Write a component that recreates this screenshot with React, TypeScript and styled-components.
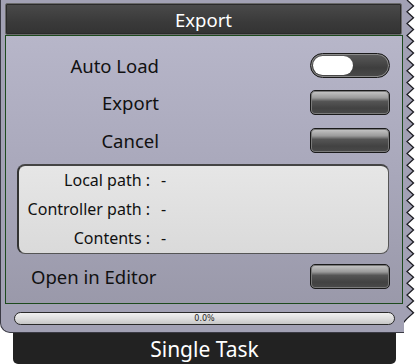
import React from "react";
import styled, { createGlobalStyle } from "styled-components";

const Global = createGlobalStyle`
  html, body { margin: 0; padding: 0; background: #ffffff; }
  body { font-family: "Noto Sans", "Open Sans", sans-serif; }
`;

const Root = styled.div`
  width: 415px;
  height: 364px;
  display: flex;
  flex-direction: column;
`;

const Top = styled.div`
  display: flex;
  height: 333px;
`;

const Panel = styled.div`
  width: 404px;
  height: 333px;
  box-sizing: border-box;
  background: #a2a1b4;
  border-left: 1px solid #3a3a44;
  border-bottom: 1px solid #3a3a44;
  border-bottom-left-radius: 10px;
  padding: 3px 0 0 4px;
  display: flex;
  flex-direction: column;
`;

const TitleBar = styled.div`
  width: 397px;
  height: 32px;
  box-sizing: border-box;
  background: linear-gradient(#4a4a4a, #3a3a3a 60%, #333333);
  border: 1px solid #6a6a6a;
  border-radius: 2px;
  box-shadow: inset 0 0 0 1px #2a2a2a;
  color: #ffffff;
  font-size: 18.5px;
  display: flex;
  align-items: center;
  justify-content: center;
`;

const Content = styled.div`
  width: 398px;
  height: 269px;
  box-sizing: border-box;
  border: 1px solid #1d4a1d;
  background: linear-gradient(#b7b6c9, #a9a8bb 50%, #9a99aa);
  padding: 17px 12px 0 0;
  display: flex;
  flex-direction: column;
`;

const Row = styled.div<{ $mt?: number }>`
  display: flex;
  align-items: center;
  height: 25px;
  margin-top: ${(p) => p.$mt ?? 0}px;
`;

const RowLabel = styled.div<{ $left?: boolean }>`
  width: ${(p) => (p.$left ? "auto" : "153px")};
  padding-left: ${(p) => (p.$left ? "25px" : "0")};
  text-align: ${(p) => (p.$left ? "left" : "right")};
  font-size: 18.5px;
  color: #111111;
  margin-right: auto;
  white-space: nowrap;
`;

const Button = styled.div`
  width: 80px;
  height: 25px;
  box-sizing: border-box;
  border: 1.5px solid #1a1a1a;
  border-radius: 5px;
  background: linear-gradient(#c8c8c8 0%, #9a9a9a 30%, #555555 45%, #424242 75%, #4a4a4a 100%);
  box-shadow: inset 0 0 0 1px #7a7a7a;
`;

const Toggle = styled.div`
  width: 80px;
  height: 25px;
  box-sizing: border-box;
  border: 1.5px solid #1a1a1a;
  border-radius: 13px;
  background: linear-gradient(#5a5a5a, #3e3e3e 60%, #4a4a4a);
  box-shadow: inset 0 0 0 1px #8a8a8a;
  padding: 2px;
  display: flex;
`;

const Knob = styled.div`
  width: 40px;
  height: 100%;
  border-radius: 10px;
  background: #ffffff;
`;

const InfoBox = styled.div`
  margin: 11px 0 0 11px;
  width: 372px;
  height: 90px;
  box-sizing: border-box;
  border-radius: 8px;
  border: 1px solid #555555;
  border-left: 2px solid #333333;
  border-top: 2px solid #444444;
  background: linear-gradient(#e6e6e6, #dadada);
  display: flex;
  flex-direction: column;
  justify-content: space-around;
  padding: 0 0 1px 0;
`;

const InfoRow = styled.div`
  display: flex;
  align-items: center;
  font-size: 16px;
  color: #111111;
`;

const InfoLabel = styled.div`
  width: 131px;
  text-align: right;
  white-space: nowrap;
`;

const InfoValue = styled.div`
  margin-left: 11px;
`;

const Progress = styled.div`
  margin: 8px 0 0 9px;
  width: 381px;
  height: 13px;
  box-sizing: border-box;
  border: 1.5px solid #2a2a2a;
  border-radius: 7px;
  background: linear-gradient(#f0f0f0, #dedede 50%, #c6c6c6);
  font-family: "DejaVu Sans", sans-serif;
  font-size: 8px;
  color: #222222;
  display: flex;
  align-items: center;
  justify-content: center;
  line-height: 1;
`;

const ZigzagCol = styled.svg`
  display: block;
  width: 11px;
  height: 333px;
`;

const Footer = styled.div`
  margin-left: 13px;
  width: 383px;
  height: 31px;
  background: #222222;
  border-radius: 0 0 5px 5px;
  color: #ffffff;
  font-size: 21px;
  display: flex;
  align-items: center;
  justify-content: center;
`;

function Zigzag() {
  const pts: string[] = [];
  const period = 11.8;
  pts.push("3,0");
  let i = 0;
  while (true) {
    const yo = i * period + period / 2;
    const yi = (i + 1) * period;
    if (yo > 322) break;
    pts.push(`9.5,${yo.toFixed(1)}`);
    pts.push(`3,${Math.min(yi, 322).toFixed(1)}`);
    i++;
  }
  const edge = pts.join(" ");
  return (
    <ZigzagCol viewBox="0 0 11 333">
      <polygon points={`-1,0 ${edge} -9,332 -1,332`} fill="#a2a1b4" />
      <polyline points={`${edge} -9,332`} fill="none" stroke="#1e1e24" strokeWidth="1.3" />
    </ZigzagCol>
  );
}

export default function App() {
  return (
    <Root>
      <Global />
      <Top>
        <Panel>
          <TitleBar>Export</TitleBar>
          <Content>
            <Row>
              <RowLabel>Auto Load</RowLabel>
              <Toggle>
                <Knob />
              </Toggle>
            </Row>
            <Row $mt={12}>
              <RowLabel>Export</RowLabel>
              <Button />
            </Row>
            <Row $mt={13}>
              <RowLabel>Cancel</RowLabel>
              <Button />
            </Row>
            <InfoBox>
              <InfoRow>
                <InfoLabel>Local path :</InfoLabel>
                <InfoValue>-</InfoValue>
              </InfoRow>
              <InfoRow>
                <InfoLabel>Controller path :</InfoLabel>
                <InfoValue>-</InfoValue>
              </InfoRow>
              <InfoRow>
                <InfoLabel>Contents :</InfoLabel>
                <InfoValue>-</InfoValue>
              </InfoRow>
            </InfoBox>
            <Row $mt={10}>
              <RowLabel $left>Open in Editor</RowLabel>
              <Button />
            </Row>
          </Content>
          <Progress>0.0%</Progress>
        </Panel>
        <Zigzag />
      </Top>
      <Footer>Single Task</Footer>
    </Root>
  );
}
